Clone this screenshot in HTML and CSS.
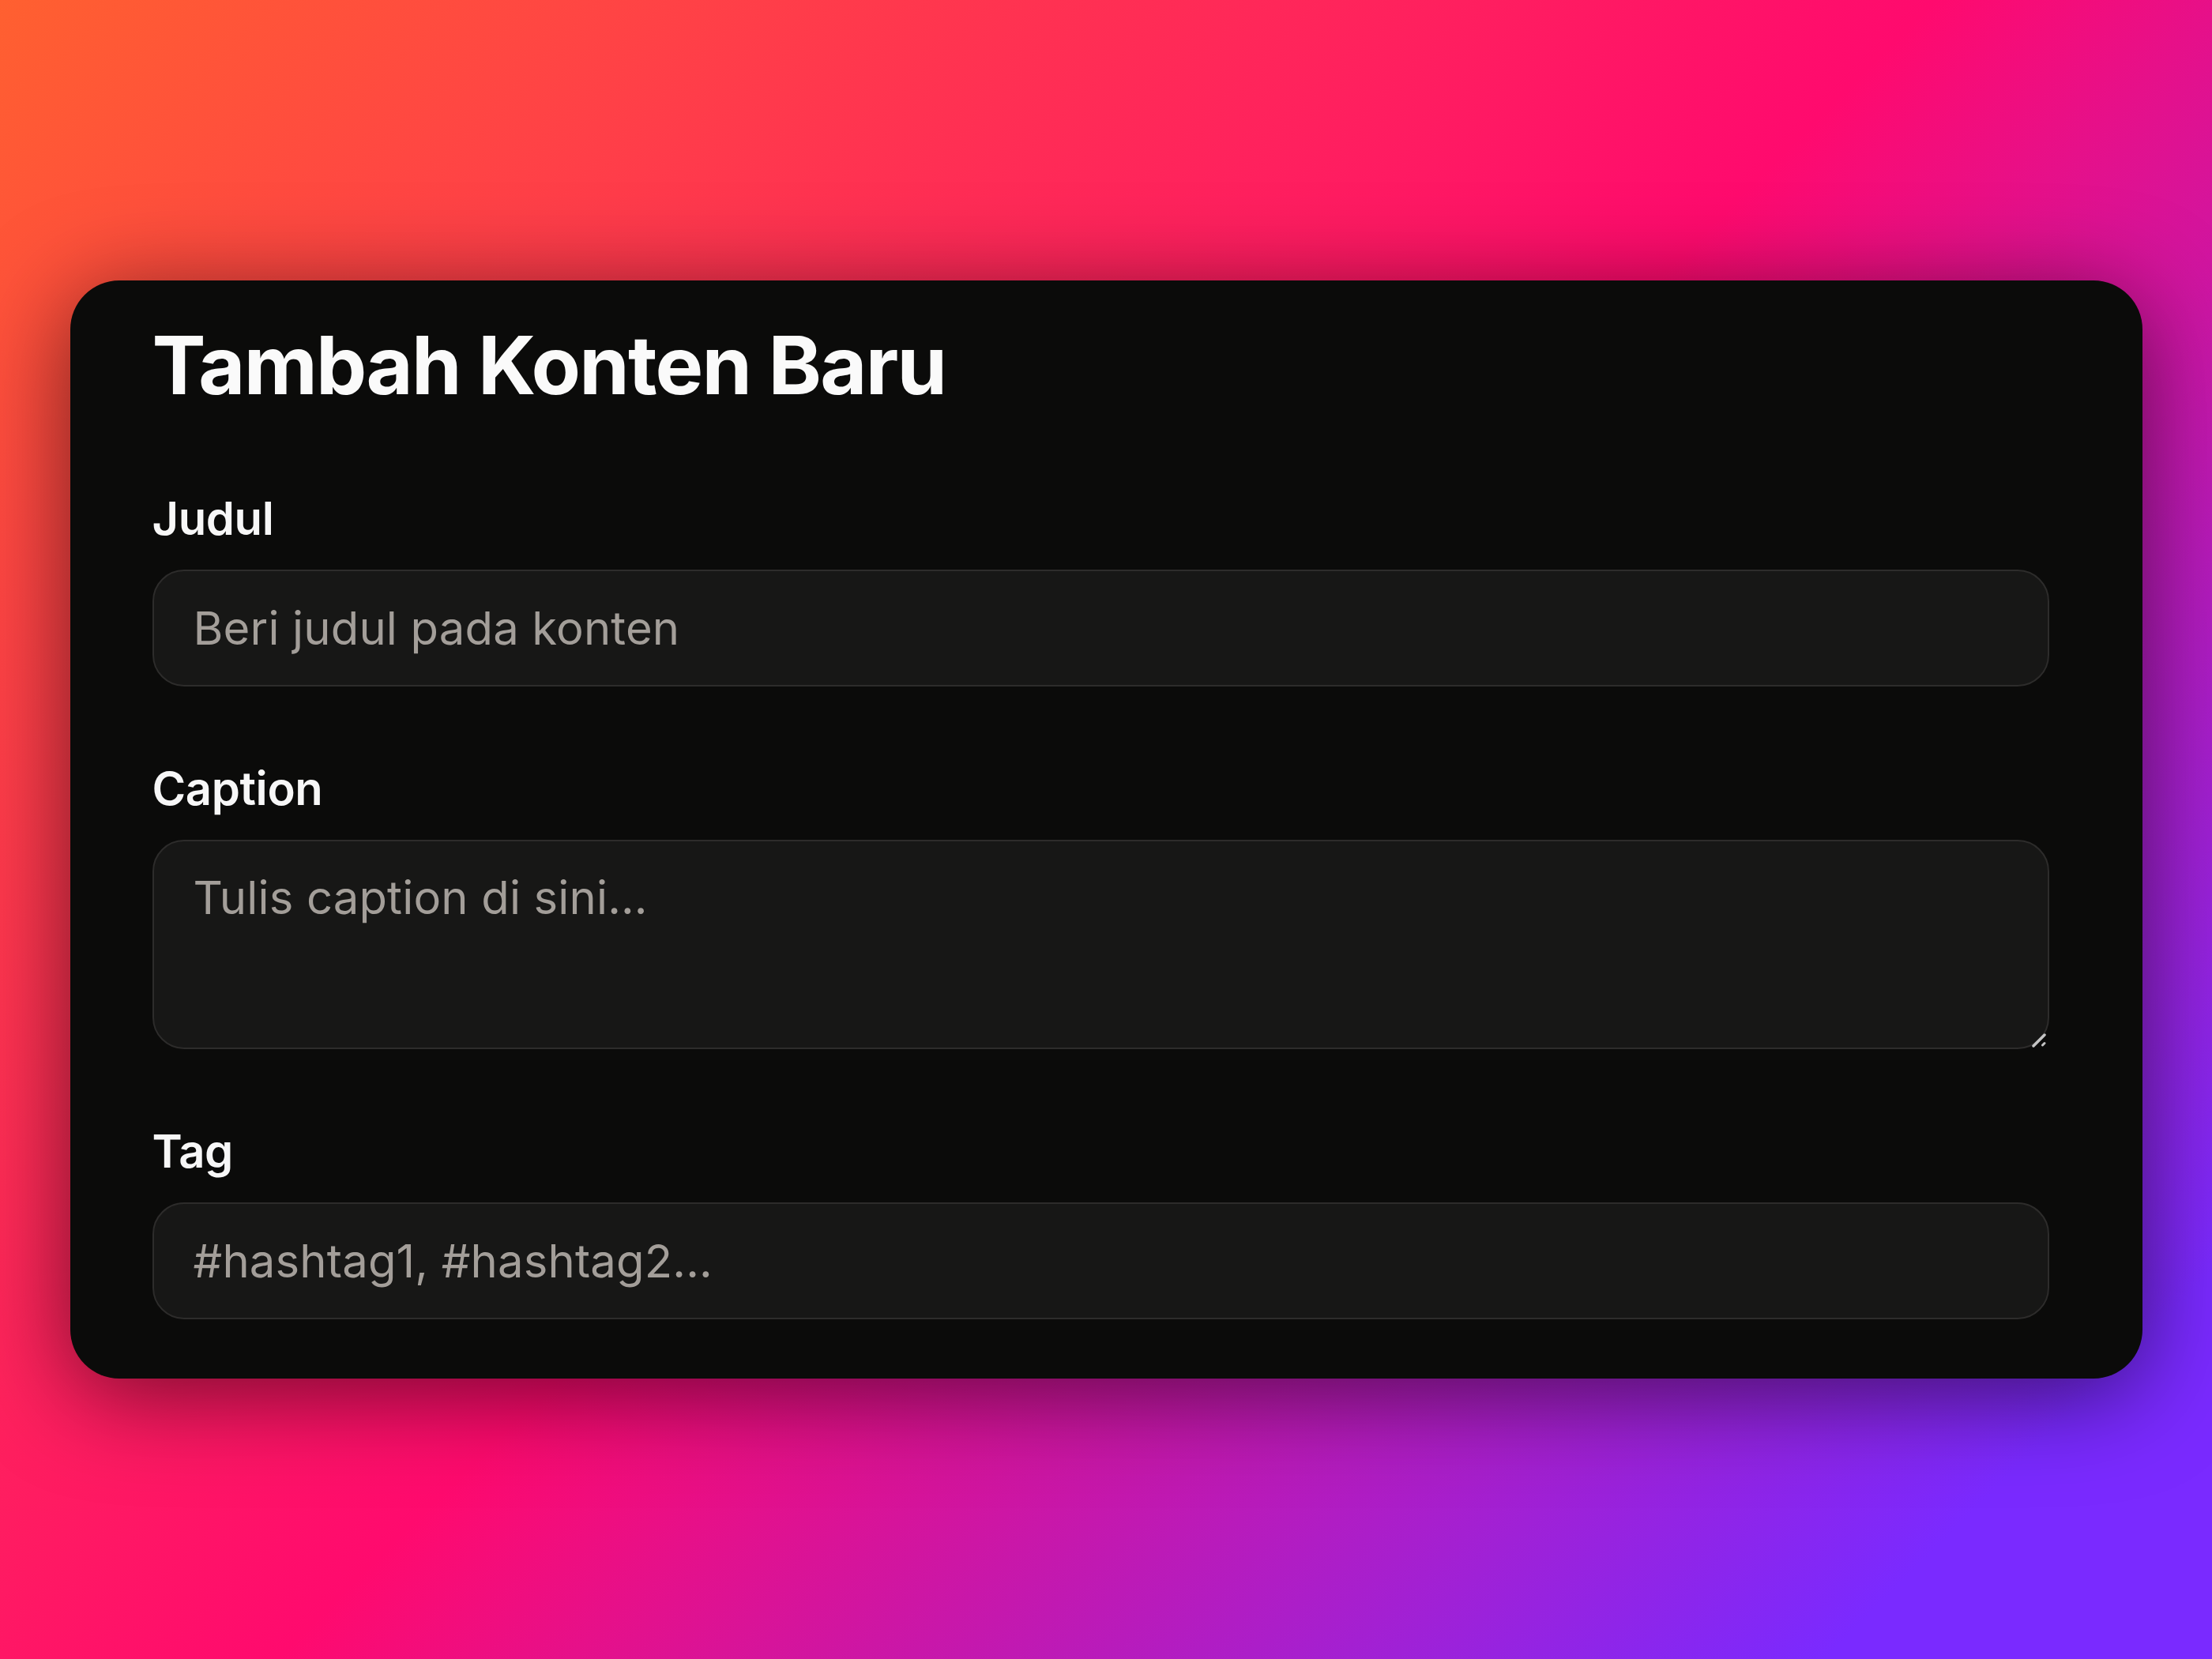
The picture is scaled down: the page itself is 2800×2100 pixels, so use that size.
FILE: index.html
```html
<!DOCTYPE html>
<html lang="id">
<head>
<meta charset="utf-8">
<title>Tambah Konten Baru</title>
<link rel="stylesheet" href="styles.css">
</head>
<body>
  <main class="card">
    <h1 class="title">Tambah Konten Baru</h1>
    <form class="form">
      <div class="field">
        <label class="label" for="judul">Judul</label>
        <input class="control" id="judul" type="text" placeholder="Beri judul pada konten">
      </div>
      <div class="field">
        <label class="label" for="caption">Caption</label>
        <div class="textarea-wrap">
          <textarea class="control textarea" id="caption" placeholder="Tulis caption di sini..."></textarea>
          <svg class="grip" width="20" height="20" viewBox="0 0 20 20" aria-hidden="true">
            <line x1="18" y1="4" x2="4" y2="18" stroke="#c4c4c4" stroke-width="3.5" stroke-linecap="round"/>
            <line x1="18" y1="14.5" x2="15.5" y2="17" stroke="#c4c4c4" stroke-width="3" stroke-linecap="round"/>
          </svg>
        </div>
      </div>
      <div class="field">
        <label class="label" for="tag">Tag</label>
        <input class="control" id="tag" type="text" placeholder="#hashtag1, #hashtag2...">
      </div>
    </form>
  </main>
</body>
</html>
```

FILE: styles.css
```css
* {
  box-sizing: border-box;
}

html, body {
  margin: 0;
  width: 2800px;
  height: 2100px;
}

body {
  display: flex;
  align-items: center;
  justify-content: center;
  background: linear-gradient(135deg, #ff6030 0%, #ff0a6e 50%, #7a2aff 90%, #7a2aff 100%);
  font-family: Inter, "Noto Sans", sans-serif;
}

.card {
  width: 2623px;
  padding: 45px 118px 75px 104px;
  background: #0b0b0a;
  border-radius: 62px;
  box-shadow: 0 20px 120px rgba(0, 0, 0, 0.55);
  display: flex;
  flex-direction: column;
}

.title {
  margin: 0 0 97px 0;
  font-size: 102px;
  line-height: 124px;
  font-weight: 700;
  color: #fafafa;
  letter-spacing: -1.8px;
}

.form {
  display: flex;
  flex-direction: column;
  gap: 94px;
}

.field {
  display: flex;
  flex-direction: column;
  gap: 29px;
}

.label {
  font-size: 58px;
  line-height: 71px;
  font-weight: 600;
  color: #f7f7f7;
  letter-spacing: -0.4px;
}

.control {
  display: block;
  width: 100%;
  height: 148px;
  margin: 0;
  padding: 36px 50px;
  background: #171716;
  border: 2px solid #2d2c2b;
  border-radius: 40px;
  font-family: Inter, "Noto Sans", sans-serif;
  font-size: 58px;
  line-height: 71px;
  letter-spacing: 0.15px;
  color: #f5f5f5;
  outline: none;
}

.control::placeholder {
  color: #a39e99;
  opacity: 1;
}

.textarea-wrap {
  position: relative;
}

.textarea {
  height: 265px;
  resize: none;
}

.grip {
  position: absolute;
  right: 4px;
  bottom: 2px;
}
```
